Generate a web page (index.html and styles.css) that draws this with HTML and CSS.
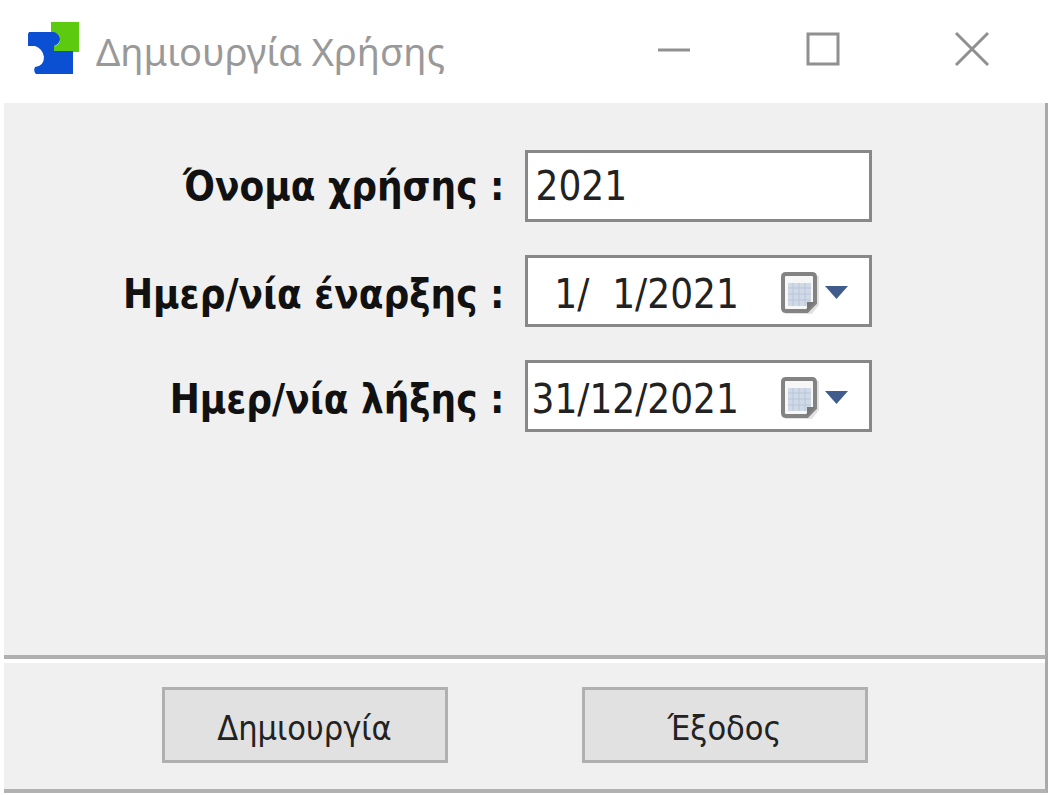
FILE: index.html
```html
<!DOCTYPE html>
<html lang="el">
<head>
<meta charset="utf-8">
<meta name="viewport" content="width=device-width, initial-scale=1">
<title>Δημιουργία Χρήσης</title>
<link rel="stylesheet" href="styles.css">
</head>
<body>
<main class="window">
  <header class="titlebar">
    <svg class="logo" viewBox="0 0 56 56" aria-hidden="true">
      <path fill="#5ccb10" d="M25 1H53V31H28V25Q34 24 34 18T28 12H25Z"/>
      <path fill="#0b50d2" d="M3 11H28Q34 13 34 18T28 25V30H47V53H10Q7 50 9 46Q18 45 18 36Q17 28 9 25H2V13Z"/>
    </svg>
    <h1 class="title">Δημιουργία Χρήσης</h1>
    <div class="controls">
      <button class="control" type="button" aria-label="Ελαχιστοποίηση">
        <svg viewBox="0 0 36 36"><path d="M2 19H34"/></svg>
      </button>
      <button class="control" type="button" aria-label="Μεγιστοποίηση">
        <svg viewBox="0 0 36 36"><path d="M3 3H33V33H3Z"/></svg>
      </button>
      <button class="control" type="button" aria-label="Κλείσιμο">
        <svg viewBox="0 0 36 36"><path d="M2 2L34 34M34 2L2 34"/></svg>
      </button>
    </div>
  </header>
  <form class="panel">
    <div class="fields">
      <label class="label" for="name">Όνομα χρήσης :</label>
      <div class="field"><input class="input input-name" id="name" type="text" value="2021"></div>

      <label class="label label-date" for="start">Ημερ/νία έναρξης :</label>
      <div class="field field-date">
        <input class="input" id="start" type="text" value="  1/  1/2021">
        <button class="picker" type="button" aria-label="Επιλογή ημερομηνίας έναρξης">
          <svg viewBox="0 0 70 46">
            <path class="sheet-shadow" d="M6 5H40V34L33 43H6Z"/>
            <path class="sheet" d="M7 3H33Q36 3 36 6V32L28 40H7Q4 40 4 37V6Q4 3 7 3Z"/>
            <path class="sheet-grid" d="M9 12H32V31L28 35H9Z"/>
            <path class="sheet-lines" d="M9 17H32M9 23H32M9 29H32M14 12V35M20 12V35M26 12V35"/>
            <path class="sheet-fold" d="M36 31H28V40Z"/>
            <path class="arrow" d="M46 15H69L57.5 28Z"/>
          </svg>
        </button>
      </div>

      <label class="label label-date" for="end">Ημερ/νία λήξης :</label>
      <div class="field field-date">
        <input class="input" id="end" type="text" value="31/12/2021">
        <button class="picker" type="button" aria-label="Επιλογή ημερομηνίας λήξης">
          <svg viewBox="0 0 70 46">
            <path class="sheet-shadow" d="M6 5H40V34L33 43H6Z"/>
            <path class="sheet" d="M7 3H33Q36 3 36 6V32L28 40H7Q4 40 4 37V6Q4 3 7 3Z"/>
            <path class="sheet-grid" d="M9 12H32V31L28 35H9Z"/>
            <path class="sheet-lines" d="M9 17H32M9 23H32M9 29H32M14 12V35M20 12V35M26 12V35"/>
            <path class="sheet-fold" d="M36 31H28V40Z"/>
            <path class="arrow" d="M46 15H69L57.5 28Z"/>
          </svg>
        </button>
      </div>
    </div>
    <div class="actions">
      <button class="button" type="button">Δημιουργία</button>
      <button class="button" type="button">Έξοδος</button>
    </div>
  </form>
</main>
</body>
</html>
```

FILE: styles.css
```css
* {
  box-sizing: border-box;
}

body {
  margin: 0;
  background: #fff;
  font-family: "DejaVu Sans Condensed", "Noto Sans", sans-serif;
  color: #111;
}

.window {
  display: flex;
  flex-direction: column;
  min-height: 100vh;
  padding: 0 0 2px 4px;
}

.titlebar {
  display: flex;
  align-items: center;
  height: 103px;
  padding: 0 2px 6px 22px;
}

.logo {
  width: 56px;
  height: 56px;
  flex: none;
}

.title {
  flex: 1;
  margin: 4px 0 0 14px;
  font: 400 38px/52px "Noto Sans", sans-serif;
  color: #999;
  white-space: nowrap;
}

.controls {
  display: flex;
}

.control {
  display: flex;
  align-items: center;
  justify-content: center;
  width: 149px;
  height: 96px;
  padding: 0;
  border: 0;
  background: none;
}

.control svg {
  width: 36px;
  height: 36px;
  fill: none;
  stroke: #909090;
  stroke-width: 3;
}

.panel {
  display: flex;
  flex: 1;
  flex-direction: column;
  background: #f0f0f0;
  border-right: 3px solid #aaa;
  border-bottom: 4px solid #b2b2b2;
}

.fields {
  display: grid;
  flex: 1;
  grid-template-columns: minmax(0, 3fr) minmax(0, 2fr) minmax(0, 1fr);
  align-content: start;
  gap: 33px 0;
  padding-top: 47px;
}

.label {
  grid-column: 1;
  height: 72px;
  padding-right: 20px;
  font-size: 40px;
  font-weight: 700;
  line-height: 72px;
  text-align: right;
  white-space: nowrap;
}

.label-date {
  padding-top: 3px;
}

.field {
  display: flex;
  grid-column: 2;
  align-items: center;
  height: 72px;
  padding: 0 20px 0 4px;
  background: #fff;
  border: 3px solid #888;
}

.field-date {
  padding-top: 6px;
}

.input {
  flex: 1;
  min-width: 0;
  height: 60px;
  padding: 0;
  border: 0;
  outline: 0;
  background: none;
  font: inherit;
  font-size: 40px;
  color: #222;
}

.input-name {
  padding-left: 4px;
}

.picker {
  flex: none;
  width: 70px;
  height: 46px;
  padding: 0;
  border: 0;
  background: none;
}

.picker svg {
  display: block;
  width: 70px;
  height: 46px;
}

.sheet-shadow {
  fill: #e2e2e2;
}

.sheet {
  fill: #f7f7f7;
  stroke: #838383;
  stroke-width: 4;
}

.sheet-grid {
  fill: #d0d9e6;
}

.sheet-lines {
  fill: none;
  stroke: #b9c5d8;
  stroke-width: 1;
}

.sheet-fold {
  fill: #777;
}

.arrow {
  fill: #3f5c8c;
}

.actions {
  display: flex;
  justify-content: center;
  gap: 134px;
  padding: 28px 20px 26px 0;
  border-top: 4px solid #b0b0b0;
  box-shadow: inset 0 4px #fff;
}

.button {
  width: 286px;
  height: 76px;
  padding: 6px 0 0;
  border: 3px solid #b0b0b0;
  background: #e1e1e1;
  font: inherit;
  font-size: 34px;
  color: #222;
}
```
